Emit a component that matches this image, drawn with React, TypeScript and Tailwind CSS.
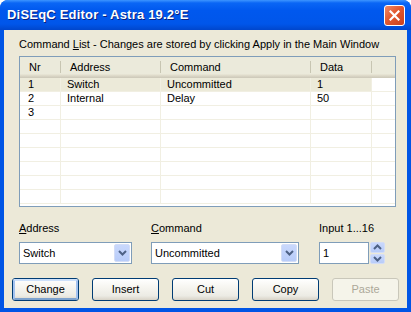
import React from "react";

const cols = [
  { w: "w-[41px]", label: "Nr" },
  { w: "w-[100px]", label: "Address" },
  { w: "w-[150px]", label: "Command" },
  { w: "w-[61px]", label: "Data" },
];

const rows: string[][] = [
  ["1", "Switch", "Uncommitted", "1"],
  ["2", "Internal", "Delay", "50"],
  ["3", "", "", ""],
  ["", "", "", ""],
  ["", "", "", ""],
  ["", "", "", ""],
  ["", "", "", ""],
  ["", "", "", ""],
  ["", "", "", ""],
];

function Chevron({ up = false }: { up?: boolean }) {
  return (
    <svg width="9" height="6" viewBox="0 0 9 6" className={up ? "rotate-180" : ""}>
      <path d="M1 1 L4.5 4.5 L8 1" fill="none" stroke="#4d6185" strokeWidth="2" />
    </svg>
  );
}

function Combo({ value, w }: { value: string; w: string }) {
  return (
    <div className={`${w} h-[22px] border border-[#7f9db9] bg-white flex items-center justify-between pl-[3px] pr-[1px]`}>
      <span>{value}</span>
      <div className="w-[16px] h-[18px] rounded-[2px] border border-[#d3ddf7] bg-[linear-gradient(180deg,#c9d8fc_0%,#b8ccf9_100%)] flex items-center justify-center">
        <Chevron />
      </div>
    </div>
  );
}

function Btn({ label, def = false, disabled = false }: { label: string; def?: boolean; disabled?: boolean }) {
  if (disabled) {
    return (
      <div className="w-[67px] h-[23px] rounded-[3px] border border-[#c9c7ba] bg-[#f5f4ea] flex items-center justify-center text-[#aca899]">
        {label}
      </div>
    );
  }
  return (
    <div className="w-[67px] h-[23px] rounded-[3px] border border-[#003c74] bg-[linear-gradient(180deg,#ffffff_0%,#f6f5f0_40%,#ecebe4_80%,#d8d3c7_100%)] flex items-center justify-center text-black">
      <div
        className={`w-full h-full rounded-[2px] flex items-center justify-center ${
          def ? "border-2 border-[#a3c2ef] border-t-[#cee1fb] border-b-[#7da2ce]" : ""
        }`}
      >
        {label}
      </div>
    </div>
  );
}

export default function App() {
  return (
    <div className="w-[411px] h-[312px] flex flex-col rounded-t-[8px] overflow-hidden bg-[#0055e5] font-['Liberation_Sans',Arial,sans-serif] text-[11px] text-black">
      {/* Title bar */}
      <div className="h-[30px] shrink-0 flex items-center justify-between pl-[7px] pr-[6px] bg-[linear-gradient(180deg,#3d95ff_0%,#0a66f5_10%,#0058ee_35%,#0056ea_80%,#0046cc_100%)]">
        <span className="text-white font-bold text-[13px] tracking-[0.2px] [text-shadow:1px_1px_0_#0a1f7d] pb-[1px]">
          DiSEqC Editor - Astra 19.2°E
        </span>
        <div className="w-[21px] h-[21px] rounded-[3px] border border-white bg-[linear-gradient(135deg,#f08a68_0%,#e2582f_45%,#c9401d_100%)] flex items-center justify-center">
          <svg width="11" height="11" viewBox="0 0 11 11">
            <path d="M1.5 1.5 L9.5 9.5 M9.5 1.5 L1.5 9.5" stroke="white" strokeWidth="2.2" strokeLinecap="square" />
          </svg>
        </div>
      </div>

      {/* Client */}
      <div className="flex-1 mx-[4px] mb-[4px] bg-[#ece9d8] flex flex-col">
        <div className="pl-[15px] pt-[8px] h-[26px] leading-[13px]">
          Command <span className="underline">L</span>ist - Changes are stored by clicking Apply in the Main Window
        </div>

        {/* List view */}
        <div className="ml-[15px] w-[377px] h-[151px] border border-[#7f9db9] bg-white flex flex-col overflow-hidden">
          <div className="h-[21px] shrink-0 flex bg-[linear-gradient(180deg,#ebeadb_0%,#ebeadb_80%,#e2decd_86%,#d6d2c2_93%,#cbc7b8_100%)]">
            {cols.map((c, i) => (
              <div key={i} className={`${c.w} shrink-0 flex items-center relative pl-[9px] ${i === 1 ? "pl-[8px]" : ""}`}>
                {c.label}
                <div className="absolute right-0 top-[4px] bottom-[5px] w-[1px] bg-[#c7c5b2]" />
              </div>
            ))}
            <div className="flex-1" />
          </div>
          {rows.map((r, ri) => (
            <div key={ri} className="h-[14px] shrink-0 flex border-b border-[#f1efe2]">
              {r.map((cell, ci) => (
                <div
                  key={ci}
                  className={`${cols[ci].w} shrink-0 flex items-center leading-[13px] border-r border-[#f1efe2] ${
                    ci === 0 ? "pl-[8px]" : "pl-[6px]"
                  } ${ri === 0 ? "bg-[#ecead9]" : ""}`}
                >
                  {cell}
                </div>
              ))}
              <div className="flex-1" />
            </div>
          ))}
        </div>

        {/* Fields */}
        <div className="pl-[15px] mt-[15px] flex">
          <div className="w-[132px] flex flex-col">
            <div className="h-[20px] leading-[13px]">
              <span className="underline">A</span>ddress
            </div>
            <Combo value="Switch" w="w-[113px]" />
          </div>
          <div className="w-[168px] flex flex-col">
            <div className="h-[20px] leading-[13px]">
              <span className="underline">C</span>ommand
            </div>
            <Combo value="Uncommitted" w="w-[148px]" />
          </div>
          <div className="flex flex-col">
            <div className="h-[20px] leading-[13px]">Input 1...16</div>
            <div className="flex">
              <div className="w-[50px] h-[22px] border border-[#7f9db9] bg-white flex items-center pl-[3px]">1</div>
              <div className="w-[16px] h-[22px] flex flex-col gap-[1px] pl-[1px]">
                <div className="flex-1 rounded-[2px] border border-[#d3ddf7] bg-[linear-gradient(180deg,#c9d8fc_0%,#b8ccf9_100%)] flex items-center justify-center">
                  <Chevron up />
                </div>
                <div className="flex-1 rounded-[2px] border border-[#d3ddf7] bg-[linear-gradient(180deg,#c9d8fc_0%,#b8ccf9_100%)] flex items-center justify-center">
                  <Chevron />
                </div>
              </div>
            </div>
          </div>
        </div>

        {/* Buttons */}
        <div className="pl-[8px] mt-[14px] flex gap-[13px]">
          <Btn label="Change" def />
          <Btn label="Insert" />
          <Btn label="Cut" />
          <Btn label="Copy" />
          <Btn label="Paste" disabled />
        </div>
      </div>
    </div>
  );
}
